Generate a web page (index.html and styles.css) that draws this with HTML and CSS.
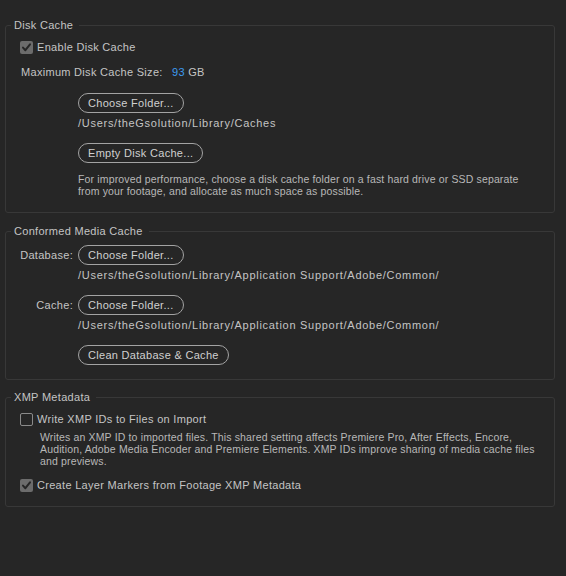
FILE: index.html
```html
<!DOCTYPE html>
<html>
<head>
<meta charset="utf-8">
<link rel="stylesheet" href="styles.css">
</head>
<body>
<div class="page">
  <fieldset class="group g-disk">
    <legend>Disk Cache</legend>
    <div class="check-row">
      <span class="cb checked"><svg viewBox="0 0 13 13" width="13" height="13"><path d="M3 6.6 L5.4 9.2 L10 3.4" fill="none" stroke="#262626" stroke-width="2" stroke-linecap="round" stroke-linejoin="round"/></svg></span>
      <span>Enable Disk Cache</span>
    </div>
    <div class="size-row">Maximum Disk Cache Size: <span class="val">93</span> GB</div>
    <div class="indent">
      <button class="pill first">Choose Folder...</button>
      <div class="path">/Users/theGsolution/Library/Caches</div>
      <button class="pill next">Empty Disk Cache...</button>
      <p class="help">For improved performance, choose a disk cache folder on a fast hard drive or SSD separate<br>from your footage, and allocate as much space as possible.</p>
    </div>
  </fieldset>

  <fieldset class="group g-media">
    <legend>Conformed Media Cache</legend>
    <div class="field-row">
      <span class="field-label">Database:</span>
      <button class="pill">Choose Folder...</button>
    </div>
    <div class="path indent">/Users/theGsolution/Library/Application Support/Adobe/Common/</div>
    <div class="field-row next">
      <span class="field-label">Cache:</span>
      <button class="pill">Choose Folder...</button>
    </div>
    <div class="path indent">/Users/theGsolution/Library/Application Support/Adobe/Common/</div>
    <div class="indent">
      <button class="pill next">Clean Database &amp; Cache</button>
    </div>
  </fieldset>

  <fieldset class="group g-xmp">
    <legend>XMP Metadata</legend>
    <div class="check-row">
      <span class="cb"></span>
      <span>Write XMP IDs to Files on Import</span>
    </div>
    <p class="help xmp-help">Writes an XMP ID to imported files. This shared setting affects Premiere Pro, After Effects, Encore,<br>Audition, Adobe Media Encoder and Premiere Elements. XMP IDs improve sharing of media cache files<br>and previews.</p>
    <div class="check-row markers">
      <span class="cb checked"><svg viewBox="0 0 13 13" width="13" height="13"><path d="M3 6.6 L5.4 9.2 L10 3.4" fill="none" stroke="#262626" stroke-width="2" stroke-linecap="round" stroke-linejoin="round"/></svg></span>
      <span>Create Layer Markers from Footage XMP Metadata</span>
    </div>
  </fieldset>
</div>
</body>
</html>
```

FILE: styles.css
```css
html, body {
  margin: 0;
  padding: 0;
  background: #262626;
}

body {
  width: 566px;
  height: 576px;
  overflow: hidden;
  font-family: "Liberation Sans", Arial, sans-serif;
  font-size: 11px;
  letter-spacing: 0.3px;
  color: #c4c4c4;
}

.page {
  padding: 18px 0 0 5px;
}

.group {
  box-sizing: border-box;
  width: 550px;
  margin: 0;
  border: 1px solid #383838;
  border-radius: 3px;
  padding: 9px 10px 14px 14px;
}

.g-disk {
  padding-bottom: 15px;
}

.g-media {
  margin-top: 11px;
  padding-top: 7px;
}

.g-xmp {
  margin-top: 10px;
}

legend {
  font-size: 11px;
  line-height: 14px;
  padding: 0 6px 0 3px;
  margin-left: -9px;
  color: #c4c4c4;
}

.check-row {
  display: flex;
  align-items: center;
  height: 13px;
  line-height: 13px;
}

.cb {
  box-sizing: border-box;
  width: 13px;
  height: 13px;
  margin-right: 4px;
  border-radius: 2px;
  border: 1.5px solid #8a8a8a;
  flex: none;
  display: flex;
}

.cb.checked {
  border: none;
  background: #6c6c6c;
}

.size-row {
  margin-top: 12px;
  line-height: 13px;
  padding-left: 1px;
}

.val {
  color: #3d9cf0;
  margin-left: 6px;
}

.indent {
  margin-left: 58px;
}

.pill {
  display: block;
  box-sizing: border-box;
  height: 20px;
  padding: 0 9px;
  border: 1.5px solid #a3a3a3;
  border-radius: 10px;
  background: transparent;
  color: #d0d0d0;
  font-family: "Liberation Sans", Arial, sans-serif;
  font-size: 11px;
  letter-spacing: 0.3px;
  line-height: 17px;
}

.pill.first {
  margin-top: 14px;
}

.pill.next {
  margin-top: 13px;
}

.path {
  margin-top: 3px;
  line-height: 14px;
  letter-spacing: 0.72px;
}

.help {
  margin: 10px 0 0 0;
  font-size: 10.5px;
  letter-spacing: 0.15px;
  line-height: 12px;
  color: #b8b8b8;
}

.field-row {
  display: flex;
  align-items: center;
}

.field-row.next {
  margin-top: 13px;
}

.field-label {
  width: 53px;
  margin-right: 5px;
  text-align: right;
  line-height: 14px;
  white-space: nowrap;
}

.xmp-help {
  margin: 5px 0 0 20px;
}

.check-row.markers {
  margin-top: 12px;
}
```
